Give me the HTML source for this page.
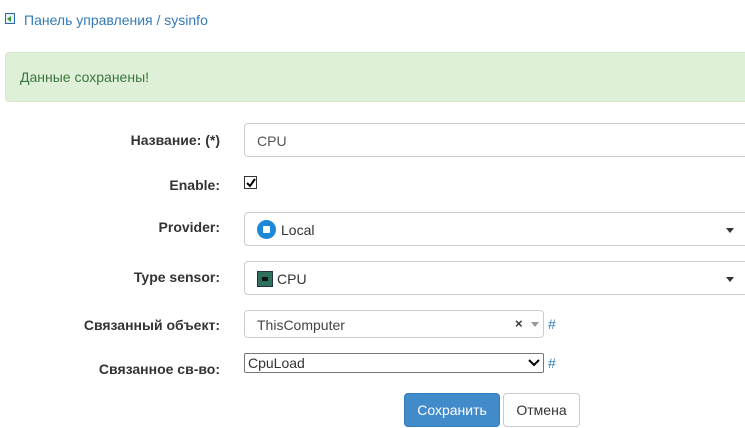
<!DOCTYPE html>
<html><head><meta charset="utf-8"><style>
body{margin:0;width:745px;height:428px;overflow:hidden;background:#fff;font-family:"Liberation Sans",sans-serif;font-size:14px;color:#333;position:relative}
.a{position:absolute}
.lbl{position:absolute;right:525px;font-weight:bold;text-align:right;white-space:nowrap}
.in{position:absolute;left:244px;border:1px solid #ccc;border-radius:4px;box-sizing:border-box;background:#fff}
.caret{position:absolute;left:481px;top:15px;width:0;height:0;border-left:4px solid transparent;border-right:4px solid transparent;border-top:5px solid #333}
</style></head><body>
<div class="a" style="left:5px;top:13px;width:10px;height:11px;border:1px solid #2b6aa8;background:#e8f0f8;box-sizing:border-box"><div style="position:absolute;left:1px;top:2px;width:0;height:0;border-top:3px solid transparent;border-bottom:3px solid transparent;border-right:4px solid #3a9a3a"></div></div>
<div class="a" style="left:24px;top:12px;color:#337ab7">Панель управления / sysinfo</div>
<div class="a" style="left:5px;top:52px;width:760px;height:50px;background:#dff0d8;border:1px solid #d6e9c6;border-radius:4px;box-sizing:border-box"></div>
<div class="a" style="left:20px;top:69px;color:#3c763d">Данные сохранены!</div>

<div class="lbl" style="top:132px">Название: (*)</div>
<div class="in" style="top:123px;width:520px;height:34px"><span class="a" style="left:12px;top:9px;color:#555">CPU</span></div>

<div class="lbl" style="top:177px">Enable:</div>
<div class="a" style="left:244px;top:176px;width:13px;height:13px;border:1px solid #333;box-sizing:border-box"><svg class="a" style="left:1px;top:1px" width="10" height="10"><path d="M1 5L4 8L9 1" stroke="#000" stroke-width="2" fill="none"/></svg></div>

<div class="lbl" style="top:219px">Provider:</div>
<div class="in" style="top:212px;width:520px;height:34px"><span class="a" style="left:12px;top:7px;width:19px;height:19px;border-radius:50%;background:#1e88d8"><span class="a" style="left:6px;top:6px;width:7px;height:7px;background:#fff;border-radius:1px"></span></span><span class="a" style="left:36px;top:9px">Local</span><div class="caret"></div></div>

<div class="lbl" style="top:269px">Type sensor:</div>
<div class="in" style="top:261px;width:520px;height:34px"><span class="a" style="left:12px;top:9px;width:14px;height:14px;background:#2f6f5e;border:1px solid #234"><span class="a" style="left:4px;top:5px;width:6px;height:4px;background:#111"></span></span><span class="a" style="left:32px;top:9px">CPU</span><div class="caret"></div></div>

<div class="lbl" style="top:317px">Связанный объект:</div>
<div class="in" style="top:310px;width:300px;height:28px"><span class="a" style="left:12px;top:6px;color:#444">ThisComputer</span><span class="a" style="left:270px;top:5px;font-size:13px;font-weight:bold">×</span><span class="a" style="left:286px;top:11px;border-left:4px solid transparent;border-right:4px solid transparent;border-top:5px solid #999"></span></div>
<div class="a" style="left:548px;top:316px;color:#337ab7">#</div>

<div class="lbl" style="top:361px">Связанное св-во:</div>
<div class="a" style="left:244px;top:353px;width:300px;height:20px;border:1px solid #767676;box-sizing:border-box;border-radius:2px"><span class="a" style="left:3px;top:1px">CpuLoad</span><svg class="a" style="left:283px;top:5px" width="12" height="8"><path d="M1 1L6 6L11 1" stroke="#000" stroke-width="2" fill="none"/></svg></div>
<div class="a" style="left:548px;top:355px;color:#337ab7">#</div>

<div class="a" style="left:404px;top:393px;width:96px;height:34px;background:#428bca;border:1px solid #357ebd;border-radius:4px;box-sizing:border-box;color:#fff;text-align:center;line-height:32px">Сохранить</div>
<div class="a" style="left:503px;top:393px;width:77px;height:34px;background:#fff;border:1px solid #ccc;border-radius:4px;box-sizing:border-box;text-align:center;line-height:32px">Отмена</div>
</body></html>
